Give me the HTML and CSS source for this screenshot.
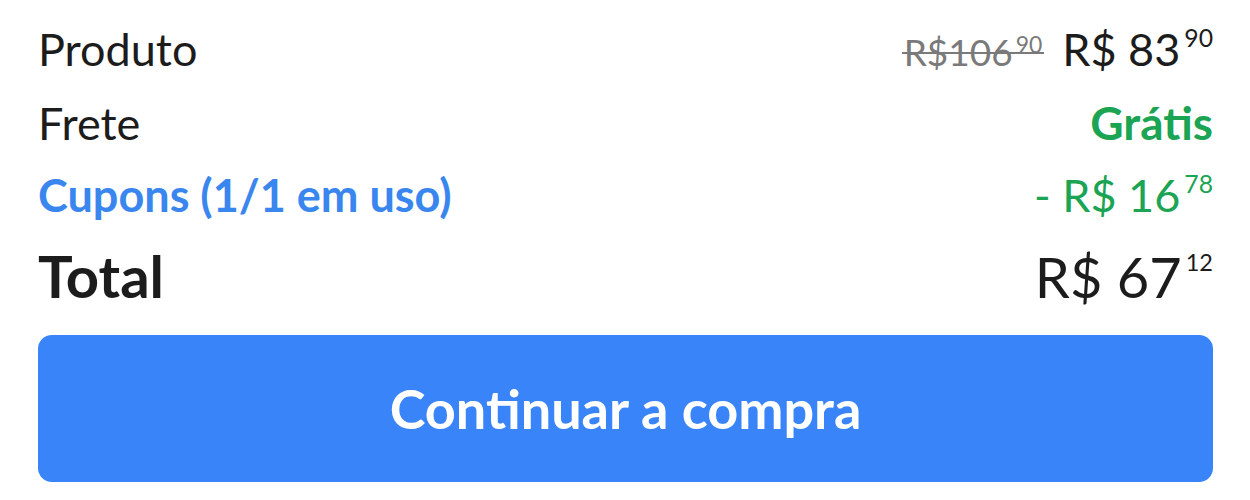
FILE: index.html
```html
<!DOCTYPE html>
<html lang="pt-BR">
<head>
    <meta charset="UTF-8">
    <meta name="viewport" content="width=device-width, initial-scale=1.0">
    <title>Resumo da compra</title>
    <link rel="stylesheet" href="styles.css">
</head>
<body>
    <div class="summary">
        <div class="summary-row">
            <span class="label">Produto</span>
            <span class="value">
                <span class="price price-old">R$106<sup>90</sup></span>
                <span class="price">R$ 83<sup>90</sup></span>
            </span>
        </div>

        <div class="summary-row">
            <span class="label">Frete</span>
            <span class="value free">Grátis</span>
        </div>

        <div class="summary-row">
            <a class="label coupon-link" href="#">Cupons (1/1 em uso)</a>
            <span class="value discount">
                <span class="price">- R$ 16<sup>78</sup></span>
            </span>
        </div>

        <div class="summary-row total-row">
            <span class="label">Total</span>
            <span class="value">
                <span class="price">R$ 67<sup>12</sup></span>
            </span>
        </div>

        <button class="checkout-button">Continuar a compra</button>
    </div>
</body>
</html>
```

FILE: styles.css
```css
body {
    margin: 0;
    background: #ffffff;
    font-family: Lato, 'Open Sans', sans-serif;
    color: #1c1c1c;
}

.summary {
    padding: 22px 37px 0 38px;
}

.summary-row {
    display: flex;
    justify-content: space-between;
    align-items: baseline;
    height: 73px;
    font-size: 45px;
}

.label {
    color: #1c1c1c;
}

.coupon-link {
    color: #3a86ef;
    font-weight: 700;
    text-decoration: none;
}

.value {
    display: flex;
    align-items: baseline;
    gap: 20px;
}

.price {
    white-space: nowrap;
}

sup {
    font-size: 0.55em;
    line-height: 1;
    vertical-align: 0;
    position: relative;
    top: -0.75em;
    margin-left: 4px;
}

/* old price: one strike line across number and cents */
.price-old {
    position: relative;
    color: #7a7a7a;
    font-size: 37px;
}

.price-old::after {
    content: "";
    position: absolute;
    left: -2px;
    right: -2px;
    top: 52%;
    height: 2px;
    background: #7a7a7a;
}

.price-old sup {
    font-size: 0.62em;
    margin-left: 3px;
    top: -0.55em;
}

.free {
    color: #1aa453;
    font-weight: 700;
    font-size: 46px;
}

.discount {
    color: #1aa453;
}

.total-row {
    height: 88px;
    font-size: 56px;
}

.total-row .label {
    font-weight: 700;
    font-size: 58px;
}

.total-row sup {
    font-size: 0.42em;
    top: -1.15em;
}

.checkout-button {
    display: block;
    width: 100%;
    height: 147px;
    margin-top: 6px;
    border: none;
    border-radius: 14px;
    background: #3884f8;
    color: #ffffff;
    font-family: inherit;
    font-size: 54px;
    font-weight: 700;
    cursor: pointer;
}
```
